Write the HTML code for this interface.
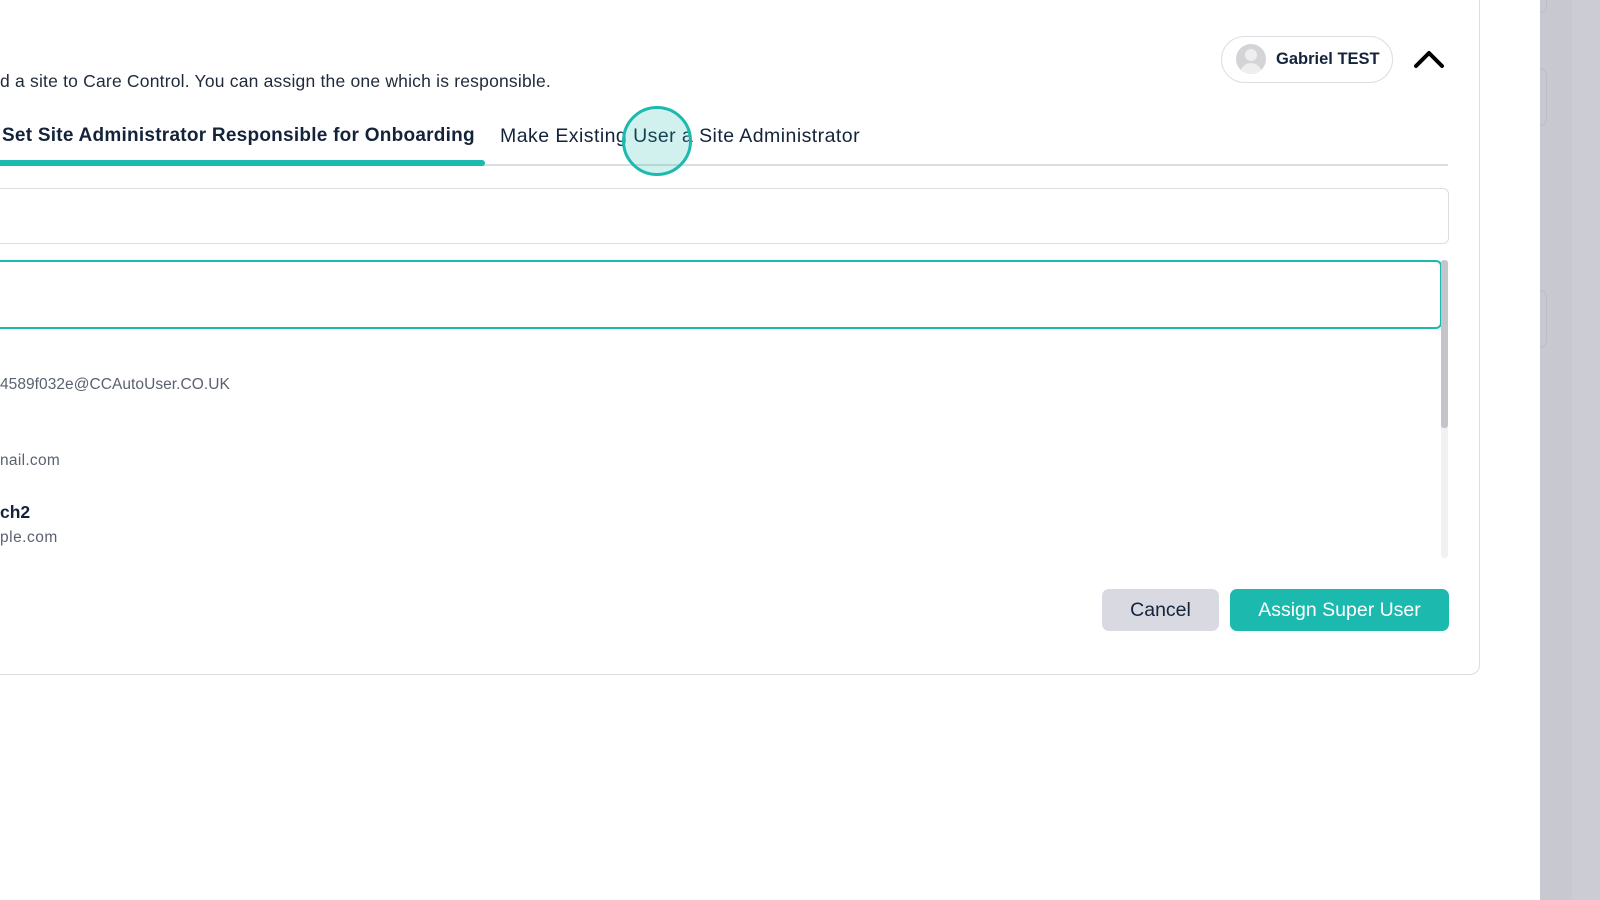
<!DOCTYPE html>
<html><head><style>
body{margin:0;width:1600px;height:900px;overflow:hidden;background:#fff;font-family:"Liberation Sans",sans-serif;position:relative;color:#1a2233}
.a{position:absolute;white-space:nowrap}
</style></head><body>
<div class="a" style="left:1540px;top:0;width:32px;height:900px;background:#c8c9d0"></div>
<div class="a" style="left:1572px;top:0;width:28px;height:900px;background:#cbccd4"></div>
<div class="a" style="left:1540px;top:68px;width:6px;height:56px;border-radius:0 8px 8px 0;border:1px solid #bcbdc5;border-left:none"></div>
<div class="a" style="left:1540px;top:290px;width:6px;height:56px;border-radius:0 8px 8px 0;border:1px solid #bcbdc5;border-left:none"></div>
<div class="a" style="left:1540px;top:0;width:6px;height:12px;border-radius:0 0 8px 0;border:1px solid #bcbdc5;border-left:none;border-top:none"></div>
<div class="a" style="left:-20px;top:-10px;width:1498px;height:683px;border:1px solid #dcdde2;border-radius:10px;background:#fff"></div>

<div class="a" style="left:0;top:71px;font-size:17.5px;letter-spacing:0.2px;color:#1f2a3a">d a site to Care Control. You can assign the one which is responsible.</div>

<div class="a" style="left:1221px;top:36px;width:170px;height:45px;border:1px solid #dcdde2;border-radius:24px"></div>
<div class="a" style="left:1236px;top:44px;width:30px;height:30px;border-radius:50%;background:#d4d4d6;overflow:hidden">
 <div style="position:absolute;left:9px;top:5px;width:12px;height:12px;border-radius:50%;background:#eee"></div>
 <div style="position:absolute;left:4px;top:19px;width:22px;height:16px;border-radius:11px 11px 0 0;background:#eee"></div>
</div>
<div class="a" style="left:1276px;top:50px;font-size:16.5px;font-weight:bold;color:#14233a">Gabriel TEST</div>
<svg class="a" style="left:1412px;top:48px" width="34" height="22"><path d="M4 18 L17 5 L30 18" fill="none" stroke="#000" stroke-width="4" stroke-linecap="round" stroke-linejoin="round"/></svg>

<div class="a" style="left:2px;top:125px;font-size:19px;font-weight:bold;color:#14233a;letter-spacing:0.25px">Set Site Administrator Responsible for Onboarding</div>
<div class="a" style="left:500px;top:125px;font-size:19.5px;letter-spacing:0.45px;color:#14233a">Make Existing User a Site Administrator</div>
<div class="a" style="left:0;top:164px;width:1448px;height:2px;background:#dcdde2"></div>
<div class="a" style="left:-10px;top:160px;width:495px;height:6px;border-radius:3px;background:#1bb9ae"></div>
<div class="a" style="left:622px;top:106px;width:64px;height:64px;border-radius:50%;border:3px solid #1bb9ae;background:rgba(27,185,174,0.2)"></div>

<div class="a" style="left:-20px;top:188px;width:1467px;height:54px;border:1px solid #dcdde2;border-radius:6px"></div>
<div class="a" style="left:-20px;top:260px;width:1458px;height:65px;border:2px solid #1bb9ae;border-radius:6px"></div>
<div class="a" style="left:1441px;top:260px;width:7px;height:298px;background:#f1f1f3;border-radius:3px"></div>
<div class="a" style="left:1441px;top:260px;width:7px;height:168px;background:#c4c5cb;border-radius:3px"></div>

<div class="a" style="left:0;top:376px;font-size:15.5px;letter-spacing:0.05px;color:#5a6170">4589f032e@CCAutoUser.CO.UK</div>
<div class="a" style="left:0;top:452px;font-size:15.5px;letter-spacing:0.3px;color:#5a6170">nail.com</div>
<div class="a" style="left:0;top:502px;font-size:17.5px;font-weight:bold;color:#14233a">ch2</div>
<div class="a" style="left:0;top:529px;font-size:15.5px;letter-spacing:0.5px;color:#5a6170">ple.com</div>

<div class="a" style="left:1102px;top:589px;width:117px;height:42px;border-radius:7px;background:#d9d9e1;font-size:19.5px;line-height:42px;text-align:center;color:#14233a">Cancel</div>
<div class="a" style="left:1230px;top:589px;width:219px;height:42px;border-radius:7px;background:#1bb9ae;font-size:19.5px;line-height:42px;text-align:center;color:#fff">Assign Super User</div>
</body></html>
